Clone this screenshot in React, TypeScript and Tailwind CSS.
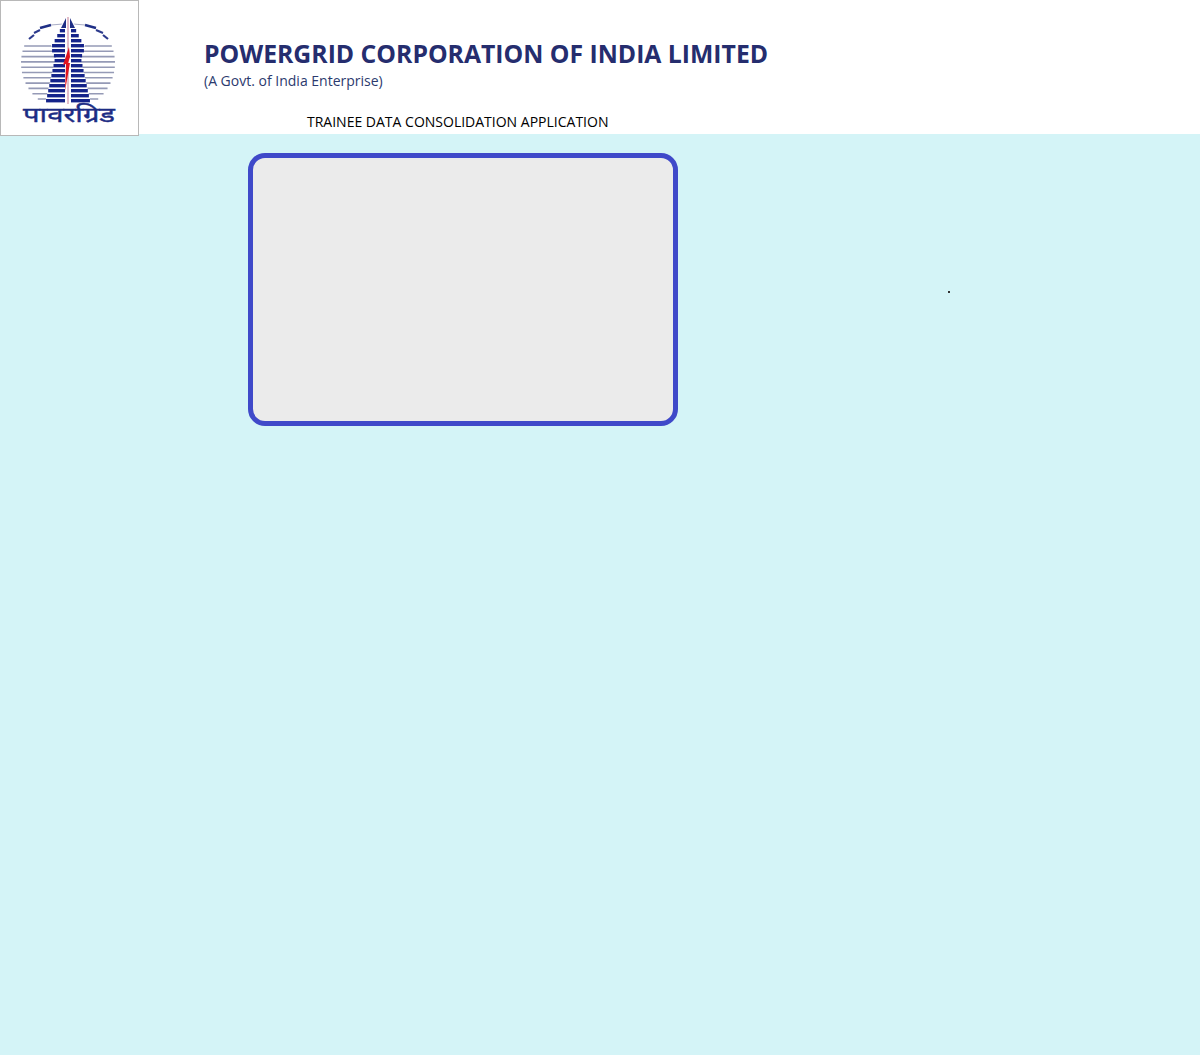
const stripes = [45, 50.3, 55.6, 60.9, 66.2, 71.5, 76.8, 82.1, 87.4, 92.7, 98];
const towerBars = [28, 33, 38, 43, 48, 53, 58, 63, 68, 73, 78, 83, 88, 93, 98];

// half width of the tower at a given height: bulges near the top, then narrows and flares out
function towerHalf(y: number) {
  if (y < 45) return 3 + ((y - 20) / 25) * 13;
  if (y < 56) return 16 - ((y - 45) / 11) * 4;
  return 12 + ((y - 56) / 47) * 10;
}

function halfCircle(y: number) {
  const dy = y - 62;
  return Math.sqrt(Math.max(0, 47 * 47 - dy * dy));
}

function Logo() {
  return (
    <svg width="137" height="134" viewBox="0 0 137 134">
      {/* top arcs, drawn in the page's coordinates minus the 1px border */}
      <path d="M39 27 L50 24" fill="none" stroke="#1f2f86" strokeWidth="2.4" />
      <path d="M84 24 L95 27" fill="none" stroke="#1f2f86" strokeWidth="2.4" />
      <path d="M33 32 L39 29" fill="none" stroke="#2c3a8c" strokeWidth="2" />
      <path d="M95 29 L102 32" fill="none" stroke="#2c3a8c" strokeWidth="2" />
      <path d="M28 38 L33 34" fill="none" stroke="#2c3a8c" strokeWidth="2.2" />
      <path d="M102 34 L107 38" fill="none" stroke="#2c3a8c" strokeWidth="2.2" />
      <path d="M50 24 L62 23 M72 23 L84 24" fill="none" stroke="#a9adc6" strokeWidth="1" />
      {stripes.map((y) => (
        <line
          key={y}
          x1={67 - halfCircle(y)}
          x2={67 + halfCircle(y)}
          y1={y}
          y2={y}
          stroke="#959ab6"
          strokeWidth="1.6"
        />
      ))}
      <path d="M64 17 L70 17 L84 44 L79 56 L90 102 L44 102 L55 56 L50 44 Z" fill="#fff" />
      <path d="M65 17 L60 27 L65 27 Z M69 17 L74 27 L69 27 Z" fill="#1f2f86" />
      {towerBars.map((y) => (
        <g key={y}>
          <rect x={66 - towerHalf(y)} y={y} width={towerHalf(y) - 2} height="3.4" fill="#14238a" />
          <rect x={70} y={y} width={towerHalf(y) - 2} height="3.4" fill="#14238a" />
        </g>
      ))}
      <line x1="67" y1="16" x2="67" y2="103" stroke="#d9a9b8" strokeWidth="1.5" />
      <path d="M68 46 L62 64 L65 63 L64 90 L69 62 L67 62 L69 56 Z" fill="#e0141e" />
      <text
        x="68"
        y="121"
        textAnchor="middle"
        fontSize="21"
        textLength="92"
        lengthAdjust="spacingAndGlyphs"
        fill="#1c2c84"
        stroke="#1c2c84"
        strokeWidth="0.4"
        fontFamily="'Noto Sans Devanagari', 'Noto Sans', sans-serif"
      >
        पावरग्रिड
      </text>
    </svg>
  );
}

export default function App() {
  return (
    <div className="min-h-[1055px] bg-[#d4f4f7] font-['Open_Sans',sans-serif]">
      <header className="h-[134px] bg-white flex items-start">
        <div className="w-[139px] h-[136px] shrink-0 border border-[#b8b8b8] bg-white relative">
          <Logo />
        </div>
        <div className="ml-[65px] pt-[36px] w-[600px]">
          <h1 className="text-[24.75px] leading-[35px] font-bold text-[#252d6e] whitespace-nowrap">
            POWERGRID CORPORATION OF INDIA LIMITED
          </h1>
          <p className="text-[14px] leading-[20px] text-[#2c3a6e]">(A Govt. of India Enterprise)</p>
          <p className="text-[14px] leading-[20px] mt-[21px] ml-[103px] text-black whitespace-nowrap">
            TRAINEE DATA CONSOLIDATION APPLICATION
          </p>
        </div>
      </header>
      <main className="flex items-start pt-[19px] pl-[248px]">
        <div className="w-[430px] h-[273px] rounded-[17px] border-[5px] border-[#3f49c9] bg-[#ebebeb]" />
        <div className="w-[2px] h-[2px] bg-[#333] ml-[270px] mt-[138px]" />
      </main>
    </div>
  );
}
